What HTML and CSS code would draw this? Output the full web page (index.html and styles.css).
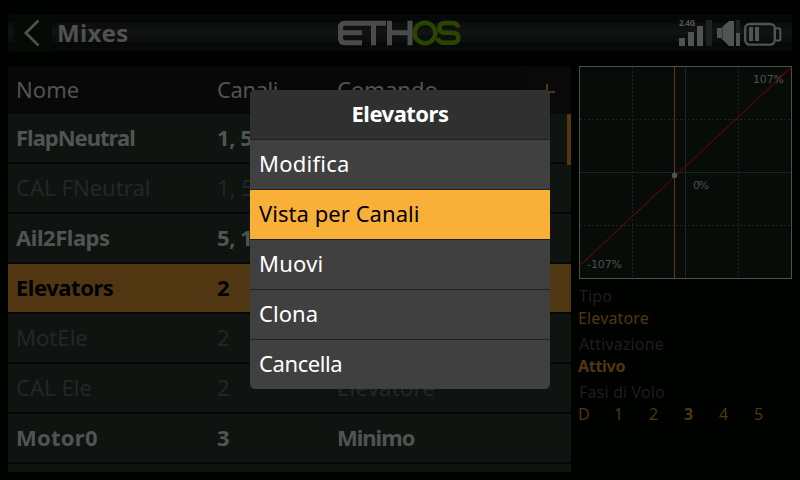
FILE: index.html
```html
<!DOCTYPE html>
<html lang="it">
<head>
<meta charset="utf-8">
<title>Mixes</title>
<link rel="stylesheet" href="styles.css">
</head>
<body>
<header class="topbar">
  <div class="back"><svg width="38" height="38" viewBox="0 0 38 38"><path d="M24.5 6.5 11.8 19 24.5 31.5" fill="none" stroke="#505250" stroke-width="2.6"/></svg></div>
  <h1 class="title">Mixes</h1>
  <svg class="logo" width="124" height="26" viewBox="0 0 124 26" fill="none" stroke-width="5">
    <g stroke="#4b4b4b"><path d="M26 3.300H7Q2.500 3.300 2.500 7.500V18.500Q2.500 22.800 7 22.800H24M4 12.800H24M26 3.300H48M35.500 3.300V25.300M51.500 0.800V25.300M72 0.800V25.300M51.500 12.800H72"/></g>
    <g stroke="#2a4500" stroke-width="4.500"><circle cx="87" cy="13" r="10.300"/><path d="M120 7.500Q119.500 3 115 3H107Q101.500 3 101.500 7.800T107 12.800H114.500Q120.300 12.800 120.300 17.800T114.500 22.800H106Q100.500 22.800 99.500 18"/></g>
  </svg>
  <svg class="status" width="104" height="28" viewBox="0 0 104 28">
    <g fill="#505452"><rect x="1" y="19" width="6" height="8"/><rect x="10" y="13" width="6" height="14"/><rect x="19" y="7" width="6" height="20"/></g>
    <g fill="#1d211f"><rect x="28" y="1" width="6" height="26"/><rect x="58" y="1" width="4" height="13"/></g>
    <path d="M39 9H43L51 2H56V27H51L43 19H39Z" fill="#505452"/>
    <path d="M44.500 8V20" stroke="#363a38" stroke-width="1"/>
    <rect x="58" y="14" width="4" height="13" fill="#505452"/>
    <g fill="none" stroke="#505452" stroke-width="2.400"><rect x="67.200" y="5" width="29.600" height="20.600" rx="4.500"/><path d="M98 9.200H100.500Q102.300 9.200 102.300 11V20Q102.300 21.500 100.500 21.500H98" stroke-width="2"/></g>
    <g fill="#505452"><rect x="71" y="8" width="4" height="14"/><rect x="77" y="8" width="4" height="14"/></g>
  </svg>
  <span class="band">2.4G</span>
</header>

<main class="main">
  <section class="table">
    <div class="row head"><span>Nome</span><span class="tight">Canali</span><span>Comando</span><span class="add"><svg width="46" height="48" viewBox="0 0 46 48"><path d="M24 18V35M16 26H32" stroke="#523610" stroke-width="2"/></svg></span></div>
    <div class="row on"><span class="tighter">FlapNeutral</span><span>1, 5</span><span></span></div>
    <div class="row off"><span>CAL FNeutral</span><span>1, 5</span><span></span></div>
    <div class="row on"><span>Ail2Flaps</span><span>5, 1</span><span></span></div>
    <div class="row on selected"><span>Elevators</span><span>2</span><span></span></div>
    <div class="row off"><span>MotEle</span><span>2</span><span></span></div>
    <div class="row off"><span>CAL Ele</span><span>2</span><span class="wide">Elevatore</span></div>
    <div class="row on"><span class="wide">Motor0</span><span>3</span><span class="tighter">Minimo</span></div>
    <div class="row last"></div>
    <i class="scroll"></i>
  </section>

  <aside class="side">
    <svg class="chart" width="213" height="213" viewBox="0 0 213 213">
      <rect x=".5" y=".5" width="212" height="212" fill="#080c09" stroke="#4c504e"/>
      <path d="M53.500 1V212M159.500 1V212M1 53.500H212M1 159.500H212" stroke="#1f2321" stroke-dasharray="2 2"/>
      <path d="M106.500 1V212M1 106.500H212" stroke="#1f2321"/>
      <path d="M0 198.500H2L212.500 1" fill="none" stroke="#520808" stroke-width="1.200"/>
      <path d="M95.500 1V213" stroke="#5a3a0c"/>
      <circle cx="95.500" cy="109.500" r="2.700" fill="#555"/>
      <g class="label"><text x="174" y="17" textLength="31">107%</text><text x="114" y="123" textLength="16">0%</text><text x="8" y="202" textLength="35">-107%</text></g>
    </svg>
    <dl class="info">
      <dt>Tipo</dt><dd class="type">Elevatore</dd>
      <dt>Attivazione</dt><dd class="active">Attivo</dd>
      <dt>Fasi di Volo</dt>
      <dd class="phases"><span>D</span><span>1</span><span>2</span><b>3</b><span>4</span><span>5</span></dd>
    </dl>
  </aside>
</main>

<div class="menu">
  <h2>Elevators</h2>
  <ul>
    <li class="wide">Modifica</li>
    <li class="current">Vista per Canali</li>
    <li class="wide">Muovi</li>
    <li>Clona</li>
    <li class="tight">Cancella</li>
  </ul>
</div>
</body>
</html>
```

FILE: styles.css
```css
* { box-sizing: border-box; margin: 0; padding: 0; }
body {
  width: 800px; height: 480px; overflow: hidden; position: relative;
  background: #000200; color: #505452;
  font-family: "Noto Sans", sans-serif; font-size: 22px; letter-spacing: .05px;
  padding: 15px 8px 0;
}
.topbar {
  height: 36px; position: relative; display: flex; align-items: center;
  background: linear-gradient(#050807 0 8px, #0d0f0e 8px 14px, #111312 14px 20px, #0c0f0d 20px 27px, #070908 27px);
}
.back { width: 38px; height: 38px; margin-left: 6px; background: #050a07; }
.title { margin-left: 5px; font-size: 24px; line-height: 36px; letter-spacing: .4px; color: #505250; }
.logo { position: absolute; left: 330px; top: 5px; }
.status { position: absolute; left: 670px; top: 4px; }
.band { position: absolute; left: 671px; top: 3px; font-size: 8px; line-height: 10px; font-weight: 700; letter-spacing: -.3px; }
.main { margin-top: 15px; display: flex; gap: 8px; }
.table { width: 563px; height: 406px; position: relative; background: #060706; }
.row {
  height: 48px; margin-bottom: 2px; padding-left: 8px; line-height: 46px;
  display: grid; grid-template-columns: 201px 120px 186px 46px; background: #0f1411; white-space: nowrap;
}
.head { margin-bottom: 0; background: #080808; }
.on { font-weight: 700; letter-spacing: -.45px; }
.off { color: #242725; }
.selected { background: #513711; color: #000; }
.last { height: 8px; margin: 0; }
.tight { letter-spacing: -.4px; }
.tighter { letter-spacing: -1px; }
.wide { letter-spacing: .25px; }
.add { height: 48px; background: #080908; }
.add svg, .back svg, .chart { display: block; }
.scroll { position: absolute; right: 0; top: 48px; width: 4px; height: 51px; background: #523710; }
.side { width: 213px; }
.label text { font: 11px "DejaVu Sans", sans-serif; letter-spacing: 0; fill: #4c504e; }
.info { margin-top: 6px; font-size: 16px; line-height: 22px; letter-spacing: .15px; }
.info dt { color: #1c1f1d; height: 22px; }
.info dd { color: #513711; height: 26px; margin-left: -1px; }
.info .active { font-weight: 700; letter-spacing: -.3px; }
.phases { display: flex; }
.phases > * { width: 35px; }
.phases > :nth-child(n+2) { position: relative; left: 1px; }
.menu { position: absolute; left: 250px; top: 90px; width: 300px; border-radius: 5px; overflow: hidden; background: #404040; color: #fff; }
.menu h2 { height: 49px; background: #303030; font-size: 22px; line-height: 47px; text-align: center; letter-spacing: -.5px; }
.menu ul { list-style: none; }
.menu li { height: 50px; border-top: 1px solid #202020; padding-left: 9px; line-height: 47px; }
.menu .current { background: #f8b038; color: #000; }
```
